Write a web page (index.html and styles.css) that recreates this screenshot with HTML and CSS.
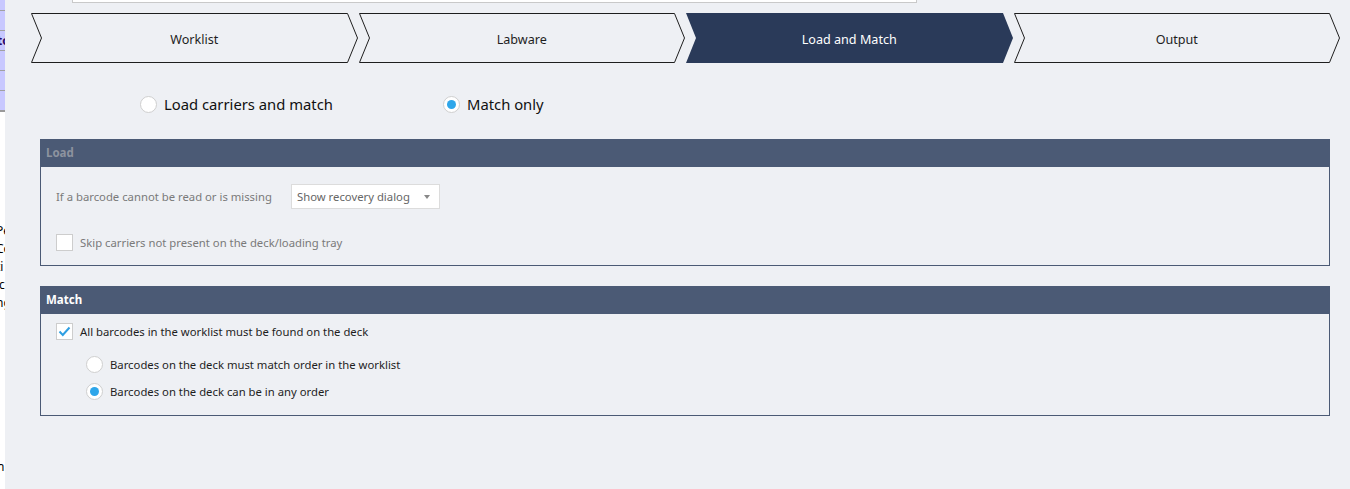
FILE: index.html
```html
<!DOCTYPE html>
<html>
<head>
<meta charset="utf-8">
<link rel="stylesheet" href="styles.css">
</head>
<body>
<div class="page">
  <div class="strip">
    <div class="strip-tabs">
      <div class="strip-tab"></div>
      <div class="strip-tab"><span class="strip-t">to</span></div>
      <div class="strip-tab"></div>
      <div class="strip-tab"></div>
      <div class="strip-tab"></div>
    </div>
    <div class="strip-text">
      <div>Pe</div><div>Co</div><div>ti</div><div>ic</div><div>ng</div>
    </div>
    <div class="strip-last">n</div>
  </div>
  <div class="main">
    <div class="topbox"></div>
    <div class="tabs">
      <div class="tab">
        <svg class="notch" width="11" height="50"><path d="M11 0.5H0.5L10.5 25L0.5 49.5H11" fill="none" stroke="#1e1e1e"/></svg>
        <div class="tab-mid">Worklist</div>
        <svg class="point" width="11" height="50"><path d="M0 0.5H0.5L10.5 25L0.5 49.5H0" fill="none" stroke="#1e1e1e"/></svg>
      </div>
      <div class="tab">
        <svg class="notch" width="11" height="50"><path d="M11 0.5H0.5L10.5 25L0.5 49.5H11" fill="none" stroke="#1e1e1e"/></svg>
        <div class="tab-mid">Labware</div>
        <svg class="point" width="11" height="50"><path d="M0 0.5H0.5L10.5 25L0.5 49.5H0" fill="none" stroke="#1e1e1e"/></svg>
      </div>
      <div class="tab active">
        <svg class="notch" width="11" height="50"><path d="M11 0H0L10 25L0 50H11Z" fill="#2a3a59"/></svg>
        <div class="tab-mid">Load and Match</div>
        <svg class="point" width="11" height="50"><path d="M0 0H1L11 25L1 50H0Z" fill="#2a3a59"/></svg>
      </div>
      <div class="tab">
        <svg class="notch" width="11" height="50"><path d="M11 0.5H0.5L10.5 25L0.5 49.5H11" fill="none" stroke="#1e1e1e"/></svg>
        <div class="tab-mid">Output</div>
        <svg class="point" width="11" height="50"><path d="M0 0.5H0.5L10.5 25L0.5 49.5H0" fill="none" stroke="#1e1e1e"/></svg>
      </div>
    </div>

    <div class="mode-row">
      <label class="mode mode-first"><span class="radio big"></span>Load carriers and match</label>
      <label class="mode"><span class="radio big checked"></span>Match only</label>
    </div>

    <section class="group">
      <div class="group-head disabled">Load</div>
      <div class="group-body load-body">
        <div class="row-select">
          <span class="label dim">If a barcode cannot be read or is missing</span>
          <div class="select"><span>Show recovery dialog</span><span class="caret"></span></div>
        </div>
        <div class="row-check">
          <span class="checkbox"></span>
          <span class="label dim">Skip carriers not present on the deck/loading tray</span>
        </div>
      </div>
    </section>

    <section class="group">
      <div class="group-head">Match</div>
      <div class="group-body match-body">
        <div class="row-check first">
          <span class="checkbox"><svg width="13" height="11" viewBox="0 0 13 11"><path d="M1.5 5.5L4.8 9L11.5 1.5" fill="none" stroke="#2f9fe2" stroke-width="2"/></svg></span>
          <span class="label">All barcodes in the worklist must be found on the deck</span>
        </div>
        <div class="sub-options">
          <div class="row-radio"><span class="radio"></span><span class="label">Barcodes on the deck must match order in the worklist</span></div>
          <div class="row-radio"><span class="radio checked"></span><span class="label">Barcodes on the deck can be in any order</span></div>
        </div>
      </div>
    </section>
  </div>
</div>
</body>
</html>
```

FILE: styles.css
```css
html, body {
  margin: 0;
  padding: 0;
  height: 100%;
}
body {
  font-family: "Noto Sans", "Open Sans", sans-serif;
  background: #eef0f4;
  color: #1e1e1e;
  overflow: hidden;
}
.page {
  display: flex;
  height: 489px;
}
.strip {
  width: 5px;
  flex: none;
  background: #ffffff;
  overflow: hidden;
  font-size: 12px;
  color: #000;
}
.strip-tabs {
  background: #c8c8ff;
  border-bottom: 2px solid #9a9a9a;
  padding-top: 10px;
}
.strip-tab {
  height: 19px;
  border-top: 1px solid #a0a0a0;
  line-height: 19px;
}
.strip-t {
  display: block;
  margin-left: -3px;
  color: #2a0b6a;
  font-weight: bold;
}
.strip-text {
  margin-top: 110px;
  line-height: 18px;
  margin-left: -4px;
}
.strip-last {
  margin-top: 146px;
  margin-left: -3px;
}
.main {
  flex: 1;
  background: #eef0f4;
  padding: 0 10px 0 26px;
}
.topbox {
  margin-left: 41px;
  width: 843px;
  height: 2px;
  background: #ffffff;
  border: 1px solid #c9c9c9;
  border-top: none;
}
.tabs {
  display: flex;
  gap: 1px;
  margin-top: 10px;
  height: 50px;
}
.tab {
  flex: 1;
  display: flex;
  height: 50px;
}
.tab svg {
  display: block;
  flex: none;
}
.tab-mid {
  flex: 1;
  border-top: 1px solid #1e1e1e;
  border-bottom: 1px solid #1e1e1e;
  display: flex;
  align-items: center;
  justify-content: center;
  font-size: 12.6px;
  color: #1e1e1e;
  padding-top: 2px;
  box-sizing: border-box;
}
.tab.active .tab-mid {
  background: #2a3a59;
  border-color: #2a3a59;
  color: #ffffff;
}
.mode-row {
  display: flex;
  align-items: center;
  margin-top: 28px;
  height: 26px;
  font-size: 14.8px;
  color: #111;
}
.mode {
  display: flex;
  align-items: center;
  gap: 7px;
}
.mode-first {
  margin-left: 109px;
  width: 303px;
}
.radio {
  width: 16px;
  height: 16px;
  border-radius: 50%;
  background: #ffffff;
  border: 1px solid #cfcfcf;
  box-sizing: border-box;
  display: inline-flex;
  align-items: center;
  justify-content: center;
  flex: none;
}
.radio.big {
  width: 17px;
  height: 17px;
}
.radio.checked::after {
  content: "";
  width: 9px;
  height: 9px;
  border-radius: 50%;
  background: #2ea6ea;
}
.group {
  margin-left: 9px;
  width: 1290px;
}
.group + .group {
  margin-top: 20px;
}
.mode-row + .group {
  margin-top: 22px;
}
.group-head {
  height: 28px;
  background: #4b5a75;
  color: #ffffff;
  font-weight: bold;
  font-size: 11.5px;
  line-height: 28px;
  padding-left: 6px;
}
.group-head.disabled {
  color: #8d939f;
}
.group-body {
  border: 1px solid #4b5a75;
  border-top: none;
  padding-left: 15px;
}
.load-body {
  height: 99px;
  padding-top: 17px;
  box-sizing: border-box;
}
.match-body {
  height: 102px;
  padding-top: 9px;
  box-sizing: border-box;
}
.label {
  font-size: 11.3px;
  color: #1e1e1e;
  white-space: nowrap;
}
.label.dim {
  color: #7a7a7a;
}
.row-select {
  display: flex;
  align-items: center;
  height: 25px;
}
.row-select .label {
  width: 235px;
}
.select {
  width: 149px;
  height: 25px;
  box-sizing: border-box;
  background: #ffffff;
  border: 1px solid #dcdcdc;
  display: flex;
  align-items: center;
  justify-content: space-between;
  padding: 0 9px 0 5px;
  font-size: 11.3px;
  color: #666;
}
.caret {
  width: 0;
  height: 0;
  border-left: 3.5px solid transparent;
  border-right: 3.5px solid transparent;
  border-top: 4px solid #888;
}
.row-check {
  display: flex;
  align-items: center;
  gap: 7px;
  height: 17px;
  margin-top: 25px;
}
.row-check.first {
  margin-top: 0;
}
.checkbox {
  width: 17px;
  height: 17px;
  box-sizing: border-box;
  background: #ffffff;
  border: 1px solid #cdcdcd;
  display: inline-flex;
  align-items: center;
  justify-content: center;
  flex: none;
}
.checkbox svg {
  display: block;
}
.sub-options {
  margin-left: 30px;
  margin-top: 16px;
  display: flex;
  flex-direction: column;
  gap: 10px;
}
.row-radio {
  display: flex;
  align-items: center;
  gap: 7px;
  height: 17px;
}
.row-radio .radio {
  width: 17px;
  height: 17px;
}
```
